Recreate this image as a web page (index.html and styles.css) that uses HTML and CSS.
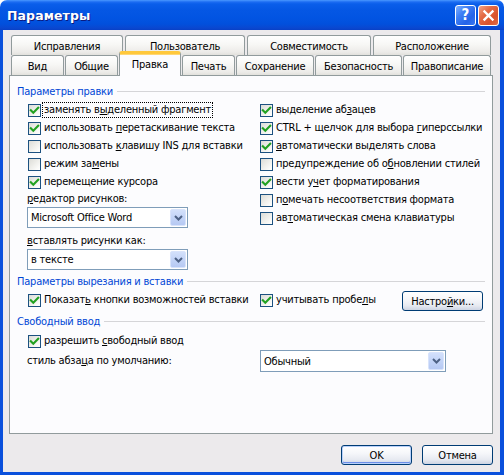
FILE: index.html
```html
<!DOCTYPE html>
<html lang="ru">
<head>
<meta charset="utf-8">
<title>Параметры</title>
<link rel="stylesheet" href="styles.css">
</head>
<body>
<div class="window">
  <div class="titlebar">
    <span class="title">Параметры</span>
    <div class="title-buttons">
      <span class="tbtn help">?</span>
      <span class="tbtn close"><svg viewBox="0 0 19 19" width="19" height="19"><path d="M5.5 5.5 L13.5 13.5 M13.5 5.5 L5.5 13.5" stroke="#fff" stroke-width="2.4" stroke-linecap="square" fill="none"/></svg></span>
    </div>
  </div>
  <div class="client">
    <div class="tabs">
      <div class="tabrow back">
        <div class="tab w-isp">Исправления</div>
        <div class="tab w-pol">Пользователь</div>
        <div class="tab w-sov">Совместимость</div>
        <div class="tab w-ras">Расположение</div>
      </div>
      <div class="tabrow front">
        <div class="tab w-vid">Вид</div>
        <div class="tab w-obs">Общие</div>
        <div class="tab w-pra selected">Правка</div>
        <div class="tab w-pec">Печать</div>
        <div class="tab w-sox">Сохранение</div>
        <div class="tab w-bez">Безопасность</div>
        <div class="tab w-prv">Правописание</div>
      </div>
    </div>
    <div class="panel">
      <div class="group-title">Параметры правки</div>
      <div class="cols">
        <div class="col left">
          <div class="chk"><span class="box"><svg viewBox="0 0 11 11" width="11" height="11"><path d="M1.8 5.2 L4.3 7.8 L9.2 2.8" class="tick"/></svg></span><span class="txt focus">заменять в<u>ы</u>деленный фрагмент</span></div>
          <div class="chk"><span class="box"><svg viewBox="0 0 11 11" width="11" height="11"><path d="M1.8 5.2 L4.3 7.8 L9.2 2.8" class="tick"/></svg></span><span class="txt">использовать <u>п</u>еретаскивание текста</span></div>
          <div class="chk"><span class="box"></span><span class="txt">использовать <u>к</u>лавишу INS для вставки</span></div>
          <div class="chk"><span class="box"></span><span class="txt">режим за<u>м</u>ены</span></div>
          <div class="chk"><span class="box"><svg viewBox="0 0 11 11" width="11" height="11"><path d="M1.8 5.2 L4.3 7.8 L9.2 2.8" class="tick"/></svg></span><span class="txt">перемещение курсора</span></div>
          <div class="field-label"><u>р</u>едактор рисунков:</div>
          <div class="select sel-left"><span class="val">Microsoft Office Word</span><span class="arrow"><svg viewBox="0 0 9 6" width="9" height="6"><path d="M1 1 L4.5 4.5 L8 1" class="chev"/></svg></span></div>
          <div class="field-label gap"><u>в</u>ставлять рисунки как:</div>
          <div class="select sel-left"><span class="val">в тексте</span><span class="arrow"><svg viewBox="0 0 9 6" width="9" height="6"><path d="M1 1 L4.5 4.5 L8 1" class="chev"/></svg></span></div>
        </div>
        <div class="col right">
          <div class="chk"><span class="box"><svg viewBox="0 0 11 11" width="11" height="11"><path d="M1.8 5.2 L4.3 7.8 L9.2 2.8" class="tick"/></svg></span><span class="txt">выделение аб<u>з</u>ацев</span></div>
          <div class="chk"><span class="box"><svg viewBox="0 0 11 11" width="11" height="11"><path d="M1.8 5.2 L4.3 7.8 L9.2 2.8" class="tick"/></svg></span><span class="txt">CTRL + щелчок для выбора <u>г</u>иперссылки</span></div>
          <div class="chk"><span class="box"><svg viewBox="0 0 11 11" width="11" height="11"><path d="M1.8 5.2 L4.3 7.8 L9.2 2.8" class="tick"/></svg></span><span class="txt"><u>а</u>втоматически выделять слова</span></div>
          <div class="chk"><span class="box"></span><span class="txt">предупреждение об о<u>б</u>новлении стилей</span></div>
          <div class="chk"><span class="box"><svg viewBox="0 0 11 11" width="11" height="11"><path d="M1.8 5.2 L4.3 7.8 L9.2 2.8" class="tick"/></svg></span><span class="txt">вести у<u>ч</u>ет форматирования</span></div>
          <div class="chk"><span class="box"></span><span class="txt">п<u>о</u>мечать несоответствия формата</span></div>
          <div class="chk"><span class="box"></span><span class="txt">ав<u>т</u>оматическая смена клавиатуры</span></div>
        </div>
      </div>

      <div class="group-title g2">Параметры вырезания и вставки</div>
      <div class="cols row-paste">
        <div class="col left">
          <div class="chk"><span class="box"><svg viewBox="0 0 11 11" width="11" height="11"><path d="M1.8 5.2 L4.3 7.8 L9.2 2.8" class="tick"/></svg></span><span class="txt">Показат<u>ь</u> кнопки возможностей вставки</span></div>
        </div>
        <div class="col right inline">
          <div class="chk"><span class="box"><svg viewBox="0 0 11 11" width="11" height="11"><path d="M1.8 5.2 L4.3 7.8 L9.2 2.8" class="tick"/></svg></span><span class="txt">учитывать пробе<u>л</u>ы</span></div>
          <button class="btn btn-settings">Настро<u>й</u>ки...</button>
        </div>
      </div>

      <div class="group-title g3">Свободный ввод</div>
      <div class="cols row-free">
        <div class="col left">
          <div class="chk"><span class="box"><svg viewBox="0 0 11 11" width="11" height="11"><path d="M1.8 5.2 L4.3 7.8 L9.2 2.8" class="tick"/></svg></span><span class="txt">разрешить <u>с</u>вободный ввод</span></div>
        </div>
      </div>
      <div class="cols row-style">
        <div class="col left"><div class="field-label">стиль абза<u>ц</u>а по умолчанию:</div></div>
        <div class="col right">
          <div class="select sel-right"><span class="val">Обычный</span><span class="arrow"><svg viewBox="0 0 9 6" width="9" height="6"><path d="M1 1 L4.5 4.5 L8 1" class="chev"/></svg></span></div>
        </div>
      </div>
    </div>
    <div class="footer">
      <button class="btn btn-main default">OK</button>
      <button class="btn btn-main">Отмена</button>
    </div>
  </div>
</div>
</body>
</html>
```
FILE: styles.css
```css
* { box-sizing: border-box; }
html, body { margin: 0; padding: 0; background: #ffffff; }
body { width: 504px; height: 475px; overflow: hidden; }

.window {
  width: 504px;
  height: 475px;
  display: flex;
  flex-direction: column;
  font-family: "DejaVu Sans Condensed", "DejaVu Sans", sans-serif;
  font-stretch: condensed;
  font-size: 11px;
  letter-spacing: -0.22px;
  color: #000;
}

/* title bar */
.titlebar {
  height: 30px;
  flex: none;
  display: flex;
  align-items: center;
  justify-content: space-between;
  padding: 0 5px 0 7px;
  border-radius: 7px 7px 0 0;
  background: linear-gradient(to bottom, #4A98FF 0px, #1C6CF2 2px, #0A5EEA 4px, #0557E4 10px, #0254E2 18px, #0150DC 24px, #0A47D0 28px, #0840C6 30px);
}
.title {
  font-family: "DejaVu Sans", sans-serif;
  font-stretch: normal;
  font-weight: bold;
  font-size: 12.5px;
  color: #ffffff;
  text-shadow: 1px 1px 0 #0A1A80;
  letter-spacing: 0.1px;
}
.title-buttons { display: flex; gap: 2px; }
.tbtn {
  width: 21px;
  height: 21px;
  border: 1px solid #ffffff;
  border-radius: 3px;
  display: flex;
  align-items: center;
  justify-content: center;
  color: #fff;
}
.help {
  background: linear-gradient(135deg, #7FB0FF 0%, #3E7FF5 35%, #2463E8 70%, #3A78F2 100%);
  font-family: "DejaVu Sans", sans-serif;
  font-weight: bold;
  font-size: 15px;
  line-height: 1;
  letter-spacing: 0;
}
.close {
  background: linear-gradient(135deg, #F2A487 0%, #E46B45 35%, #D9532C 70%, #E06A45 100%);
}

/* client area */
.client {
  flex: 1;
  display: flex;
  flex-direction: column;
  background: #ECEAEC;
  border-style: solid;
  border-color: #0A50DC;
  border-width: 0 4px 3px 3px;
  padding: 0 7px 7px 6px;
}

/* tabs */
.tabs { margin-top: 5px; padding: 0 2px; }
.tabrow { display: flex; align-items: flex-end; height: 20px; }
.tabrow.back { gap: 2px; }
.tabrow.front { gap: 1px; }
.tab {
  height: 20px;
  flex: none;
  display: flex;
  align-items: center;
  justify-content: center;
  border: 1px solid #919B9C;
  border-bottom: none;
  border-radius: 3px 3px 0 0;
  background: linear-gradient(to bottom, #FFFFFF 0%, #F7F7F5 45%, #ECEBE8 85%, #E2E1DC 100%);
  padding-top: 1px;
  white-space: nowrap;
}
.tab.selected {
  position: relative;
  z-index: 2;
  height: 25px;
  margin-top: -4px;
  margin-bottom: -1px;
  background: #FCFCFE;
  border-top: 3px solid #FFC83C;
  box-shadow: inset 0 1px 0 #FFD774;
  padding-top: 0;
  padding-bottom: 2px;
}
.w-isp { width: 112px; }
.w-pol { width: 120px; }
.w-sov { width: 124px; }
.w-ras { width: 118px; }
.w-vid { width: 53px; }
.w-obs { width: 53px; }
.w-pra { width: 62px; }
.w-pec { width: 53px; }
.w-sox { width: 78px; }
.w-bez { width: 87px; }
.w-prv { width: 88px; }

/* panel */
.panel {
  flex: 1;
  border: 1px solid #919B9C;
  background: #FCFCFE;
  padding: 8px 7px 0 7px;
}
.group-title {
  display: flex;
  align-items: center;
  height: 14px;
  color: #0046D5;
  white-space: nowrap;
}
.group-title::after {
  content: "";
  flex: 1;
  height: 1px;
  margin-left: 4px;
  background: #D5D5D8;
}
.group-title.g2 { margin-top: 4px; }
.group-title.g3 { margin-top: 2px; }

.cols {
  display: grid;
  grid-template-columns: 243px 1fr;
  margin-top: 3px;
}
.col.left { padding-left: 10px; }

.chk {
  display: flex;
  align-items: center;
  height: 18px;
  white-space: nowrap;
}
.col.left .chk { margin-left: 1px; }
.box {
  width: 13px;
  height: 13px;
  flex: none;
  border: 1px solid #1C5180;
  background: linear-gradient(135deg, #DCDCD7 0%, #EDEDE9 45%, #FAFAF8 80%, #FFFFFF 100%);
  margin-right: 3px;
  display: flex;
}
.tick { fill: none; stroke: #21A121; stroke-width: 2.1; stroke-linecap: square; stroke-linejoin: miter; }
.txt { line-height: 14px; }
.txt.focus { outline: 1px dotted #000; outline-offset: 0; padding: 0 1px; margin-left: -1px; }
u { text-decoration: underline; text-underline-offset: 1px; }

.field-label { height: 16px; line-height: 16px; white-space: nowrap; }
.field-label.gap { margin-top: 5px; }

.select {
  display: flex;
  align-items: center;
  height: 21px;
  border: 1px solid #7F9DB9;
  background: #ffffff;
  padding-left: 3px;
}
.select .val { flex: 1; white-space: nowrap; }
.select .arrow {
  width: 16px;
  height: 17px;
  margin: 1px;
  border: 1px solid #D8E3FB;
  border-radius: 2px;
  background: linear-gradient(to bottom, #D3E0FB 0%, #C3D4F7 50%, #B6C9F3 100%);
  display: flex;
  align-items: center;
  justify-content: center;
}
.chev { fill: none; stroke: #4D6185; stroke-width: 2; }
.sel-left { width: 161px; }
.sel-right { width: 186px; height: 22px; }
.sel-right .arrow { height: 18px; }

.row-paste { height: 24px; align-items: center; margin-top: 0; }
.row-paste .col { display: flex; align-items: center; height: 24px; }
.col.inline { justify-content: space-between; padding-right: 2px; }
.row-free { margin-top: 4px; }
.row-style { margin-top: 0; align-items: center; }

/* buttons */
.btn {
  font: inherit;
  letter-spacing: inherit;
  color: #000;
  padding: 0;
  border: 1px solid #003C74;
  border-radius: 3px;
  background: linear-gradient(to bottom, #FFFFFF 0%, #F6F7FA 40%, #E7EAF1 75%, #CDD4E3 100%);
  display: flex;
  align-items: center;
  justify-content: center;
}
.btn-settings { width: 81px; height: 20px; margin-top: 2px; }
.btn-main { width: 71px; height: 20px; }
.btn.default {
  box-shadow: inset 0 0 0 1px #B9D1FA, inset 0 -1px 0 1px #6C8EE8;
}

.footer {
  display: flex;
  justify-content: flex-end;
  gap: 10px;
  margin-top: 11px;
}
```
